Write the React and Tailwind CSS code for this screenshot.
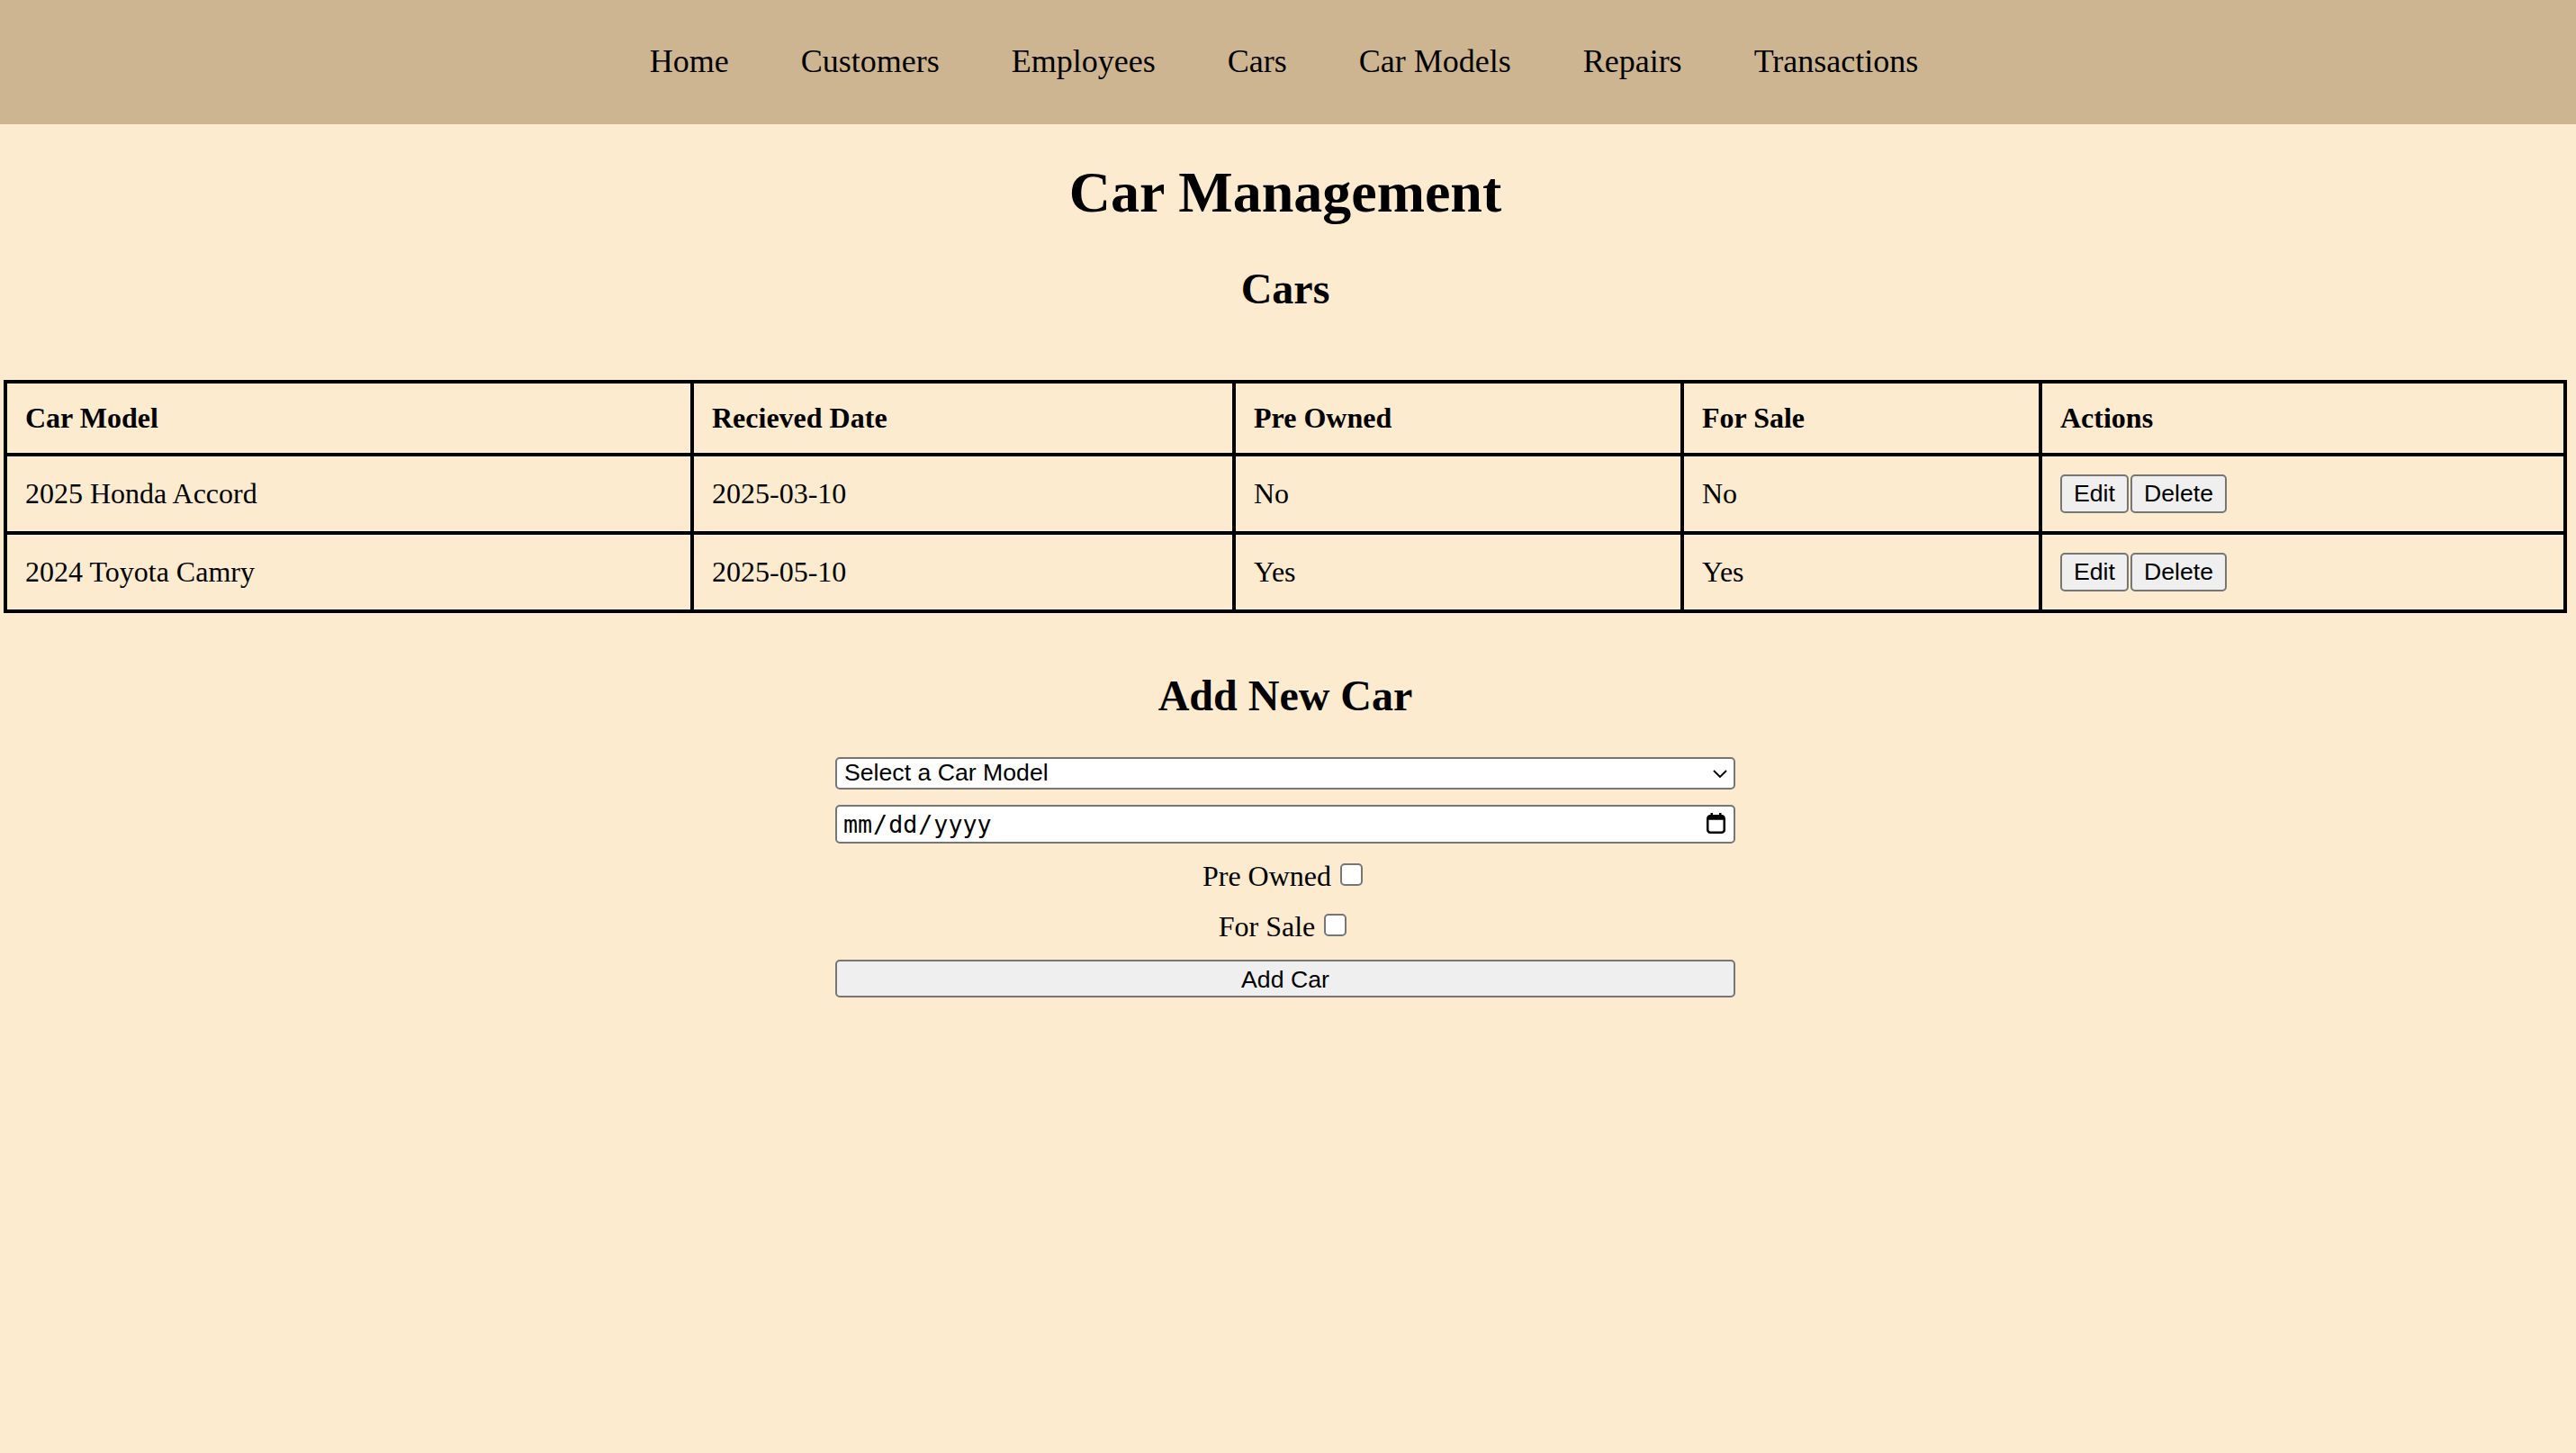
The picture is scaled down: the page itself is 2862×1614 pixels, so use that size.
import React from 'react';

const links = ['Home', 'Customers', 'Employees', 'Cars', 'Car Models', 'Repairs', 'Transactions'];

const cars = [
  { model: '2025 Honda Accord', received: '2025-03-10', preOwned: 'No', forSale: 'No' },
  { model: '2024 Toyota Camry', received: '2025-05-10', preOwned: 'Yes', forSale: 'Yes' },
];

const headers = ['Car Model', 'Recieved Date', 'Pre Owned', 'For Sale', 'Actions'];

const sans = "font-['Liberation_Sans',Arial,sans-serif]";

function CalendarIcon() {
  return (
    <svg viewBox="0 0 21 23" className="absolute right-[11px] top-[9px] w-[21px] h-[23px] pointer-events-none">
      <rect x="1.25" y="3.25" width="18.5" height="18.5" rx="3" fill="white" stroke="black" strokeWidth="2.5" />
      <rect x="1.25" y="3.25" width="18.5" height="4.5" fill="black" />
      <rect x="4.5" y="0" width="2.5" height="5" fill="black" />
      <rect x="14" y="0" width="2.5" height="5" fill="black" />
    </svg>
  );
}

export default function App() {
  return (
    <div className="min-h-screen bg-[#fcebcf] text-black font-['Liberation_Serif','Times_New_Roman',serif]">
      {/* Top navigation */}
      <nav className="h-[138px] bg-[#ceb591] flex items-center justify-center gap-[80px] pr-[9px] pb-[2px] text-[36px] leading-[40px]">
        {links.map((l) => (
          <a key={l} href="#" className="text-black">{l}</a>
        ))}
      </nav>

      <main className="w-[2856px]">
        <h1 className="mt-[40px] text-center text-[64px] leading-[71px] font-bold">Car Management</h1>
        <h2 className="mt-[45px] text-center text-[48px] leading-[53px] font-bold">Cars</h2>

        {/* Cars table */}
        <table className="mt-[75px] ml-[4px] w-[2848px] table-fixed border-collapse text-[32px] leading-[37px]">
          <colgroup>
            <col className="w-[763px]" />
            <col className="w-[602px]" />
            <col className="w-[498px]" />
            <col className="w-[398px]" />
            <col className="w-[583px]" />
          </colgroup>
          <thead>
            <tr>
              {headers.map((h) => (
                <th key={h} className="border-4 border-black p-[20px] text-left align-top font-bold">{h}</th>
              ))}
            </tr>
          </thead>
          <tbody>
            {cars.map((c) => (
              <tr key={c.model}>
                <td className="border-4 border-black p-[20px] align-middle">{c.model}</td>
                <td className="border-4 border-black p-[20px] align-middle">{c.received}</td>
                <td className="border-4 border-black p-[20px] align-middle">{c.preOwned}</td>
                <td className="border-4 border-black p-[20px] align-middle">{c.forSale}</td>
                <td className="border-4 border-black p-[20px] align-middle">
                  <div className={`flex h-[43px] ${sans} text-[26.67px]`}>
                    <button className="h-[43px] px-[13px] bg-[#efefef] border-2 border-[#767676] rounded-[5px]">Edit</button>
                    <button className="h-[43px] px-[13px] ml-[2px] bg-[#efefef] border-2 border-[#767676] rounded-[5px]">Delete</button>
                  </div>
                </td>
              </tr>
            ))}
          </tbody>
        </table>

        <h2 className="mt-[65px] text-center text-[48px] leading-[53px] font-bold">Add New Car</h2>

        {/* Add form */}
        <form className="mt-[42px] mx-auto w-[1000px] flex flex-col">
          <div className="relative h-[36px]">
            <select className={`appearance-none w-full h-full bg-white border-2 border-[#767676] rounded-[5px] pl-[8px] pb-[2px] leading-[28px] text-[26.67px] ${sans}`}>
              <option>Select a Car Model</option>
            </select>
            <svg viewBox="0 0 16 9" className="absolute right-[9px] top-[14px] w-[16px] h-[9px] pointer-events-none">
              <path d="M1 1l7 7 7-7" fill="none" stroke="black" strokeWidth="1.8" />
            </svg>
          </div>

          <div className="relative mt-[17px] h-[43px]">
            <input
              type="date"
              className="w-full h-full bg-white border-2 border-[#767676] rounded-[5px] pl-[6px] text-[26.67px] font-['DejaVu_Sans_Mono',monospace] [&::-webkit-calendar-picker-indicator]:hidden"
            />
            <CalendarIcon />
          </div>

          <label className="mt-[18px] block text-center text-[32px] leading-[37px]">
            Pre Owned<input type="checkbox" className="appearance-none inline-block align-baseline w-[25px] h-[25px] ml-[10px] mr-[6px] bg-white border-2 border-[#767676] rounded-[5px]" />
          </label>
          <label className="mt-[19px] block text-center text-[32px] leading-[37px]">
            For Sale<input type="checkbox" className="appearance-none inline-block align-baseline w-[25px] h-[25px] ml-[10px] mr-[6px] bg-white border-2 border-[#767676] rounded-[5px]" />
          </label>

          <button type="button" className={`mt-[18px] h-[42px] w-full pb-[5px] bg-[#efefef] border-2 border-[#767676] rounded-[5px] text-[26.67px] ${sans}`}>
            Add Car
          </button>
        </form>
      </main>
    </div>
  );
}
